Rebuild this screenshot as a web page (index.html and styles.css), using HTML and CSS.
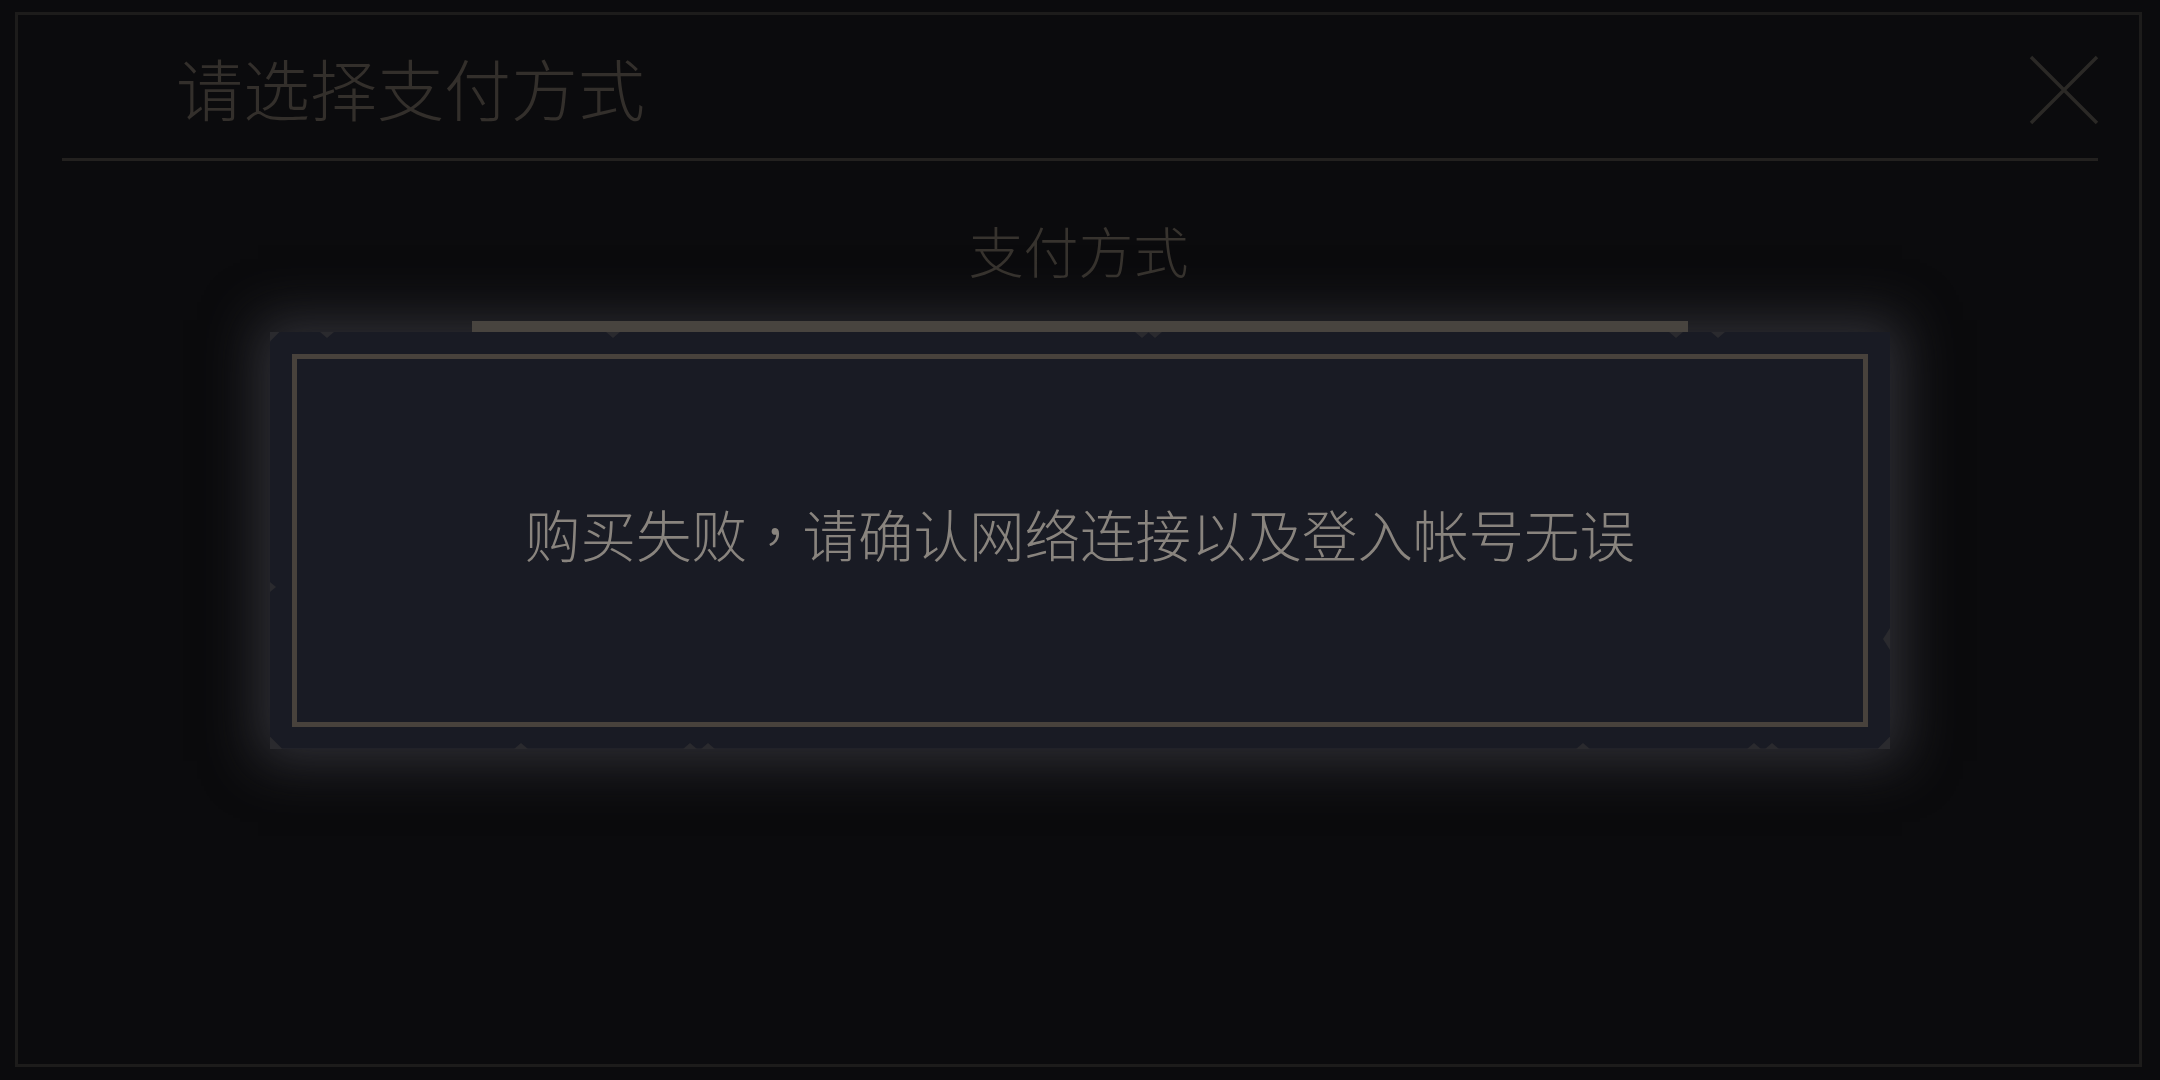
FILE: index.html
```html
<!DOCTYPE html>
<html lang="zh-CN">
<head>
<meta charset="utf-8">
<title>请选择支付方式</title>
<link rel="stylesheet" href="styles.css">
</head>
<body>
<div class="screen">
  <div class="frame">
    <header class="header">
      <h1 class="title">请选择支付方式</h1>
      <button class="close" aria-label="关闭">
        <svg viewBox="0 0 70 70" width="70" height="70">
          <path d="M2 2 L68 68 M68 2 L2 68" stroke="#2b2926" stroke-width="3.5" fill="none"/>
        </svg>
      </button>
    </header>
    <div class="divider"></div>
    <h2 class="section-title">支付方式</h2>
  </div>

  <div class="overlay">
    <div class="dialog">
      <div class="tab-edge"></div>
      <div class="panel">
        <div class="panel-inner">
          <p class="message">购买失败<span class="punct" lang="zh-TW">，</span>请确认网络连接以及登入帐号无误</p>
        </div>
      </div>
      <span class="notch down t1"></span>
      <span class="notch down t2"></span>
      <span class="notch down t3"></span>
      <span class="notch down t4"></span>
      <span class="notch down t5"></span>
      <span class="notch down t6"></span>
      <span class="notch up b1"></span>
      <span class="notch up b2"></span>
      <span class="notch up b3"></span>
      <span class="notch up b4"></span>
      <span class="notch up b5"></span>
      <span class="notch up b6"></span>
      <span class="notch right l1"></span>
      <span class="notch left r1"></span>
    </div>
  </div>
</div>
</body>
</html>
```
FILE: styles.css
```css
html, body {
  margin: 0;
  padding: 0;
  background: #0b0b0d;
}

.screen {
  position: relative;
  width: 2160px;
  height: 1080px;
  padding: 12px 18px 13px 15px;
  box-sizing: border-box;
  overflow: hidden;
  font-family: "Noto Sans CJK SC", "Noto Sans", sans-serif;
}

.frame {
  height: 100%;
  border: 3px solid #1d1c1b;
  box-sizing: border-box;
}

.header {
  height: 143px;
  display: flex;
  align-items: center;
  justify-content: space-between;
  padding: 0 40px 0 158px;
}

.title {
  margin: 0;
  font-size: 67px;
  font-weight: 300;
  line-height: 1;
  color: #332f2b;
}

.close {
  width: 70px;
  height: 70px;
  margin-top: 7px;
  padding: 0;
  border: 0;
  background: none;
  display: block;
}

.close svg {
  display: block;
}

.divider {
  height: 3px;
  margin: 0 41px 0 44px;
  background: #23211f;
}

.section-title {
  margin: 61px 0 0;
  text-align: center;
  font-size: 55px;
  font-weight: 300;
  line-height: 1;
  color: #37332e;
}

.overlay {
  position: absolute;
  inset: 0;
  display: flex;
  align-items: center;
  justify-content: center;
}

.dialog {
  position: relative;
  width: 1620px;
  height: 417px;
  background: #2a2a2e;
  box-shadow: 0 0 50px 12px rgb(48, 48, 54);
}

.tab-edge {
  position: absolute;
  left: 202px;
  top: -11px;
  width: 1216px;
  height: 11px;
  background: #48443f;
}

.panel {
  height: 100%;
  box-sizing: border-box;
  padding: 22px;
  background: #191b24;
  clip-path: polygon(10px 0, 100% 0, 100% calc(100% - 12px), calc(100% - 12px) 100%, 12px 100%, 0 calc(100% - 12px), 0 10px);
}

.panel-inner {
  height: 100%;
  box-sizing: border-box;
  border: 5px solid #48423c;
  display: flex;
  align-items: center;
  justify-content: center;
}

.message {
  margin: 0 0 12px;
  font-size: 55.5px;
  font-weight: 300;
  line-height: 1;
  color: #89847e;
  white-space: nowrap;
}

.punct {
  font-family: "Noto Sans CJK TC", "Noto Sans CJK SC", sans-serif;
}

/* decorative frame notches */
.notch {
  position: absolute;
  width: 0;
  height: 0;
}

.notch.down {
  top: 0;
  border-left: 7px solid transparent;
  border-right: 7px solid transparent;
  border-top: 6px solid #2a2a2e;
}

.notch.up {
  bottom: 0;
  border-left: 7px solid transparent;
  border-right: 7px solid transparent;
  border-bottom: 6px solid #2a2a2e;
}

.notch.right {
  left: 0;
  border-top: 5px solid transparent;
  border-bottom: 5px solid transparent;
  border-left: 6px solid #2a2a2e;
}

.notch.left {
  right: 0;
  border-top: 11px solid transparent;
  border-bottom: 11px solid transparent;
  border-right: 7px solid #2a2a2e;
}

.t1 { left: 50px; border-left-width: 4px; border-right-width: 4px; border-top-width: 4px; }
.t2 { left: 336px; }
.t3 { left: 865px; }
.t4 { left: 878px; border-left-width: 11px; border-right-width: 11px; border-top-width: 8px; }
.t5 { left: 1399px; }
.t6 { left: 1441px; border-left-width: 4px; border-right-width: 4px; border-top-width: 4px; }

.b1 { left: 244px; border-left-width: 4px; border-right-width: 4px; border-bottom-width: 4px; }
.b2 { left: 413px; border-left-width: 9px; border-right-width: 9px; border-bottom-width: 8px; }
.b3 { left: 431px; }
.b4 { left: 1306px; border-left-width: 4px; border-right-width: 4px; border-bottom-width: 4px; }
.b5 { left: 1477px; border-left-width: 9px; border-right-width: 9px; border-bottom-width: 8px; }
.b6 { left: 1495px; }

.l1 { top: 250px; }
.r1 { top: 296px; }
```
